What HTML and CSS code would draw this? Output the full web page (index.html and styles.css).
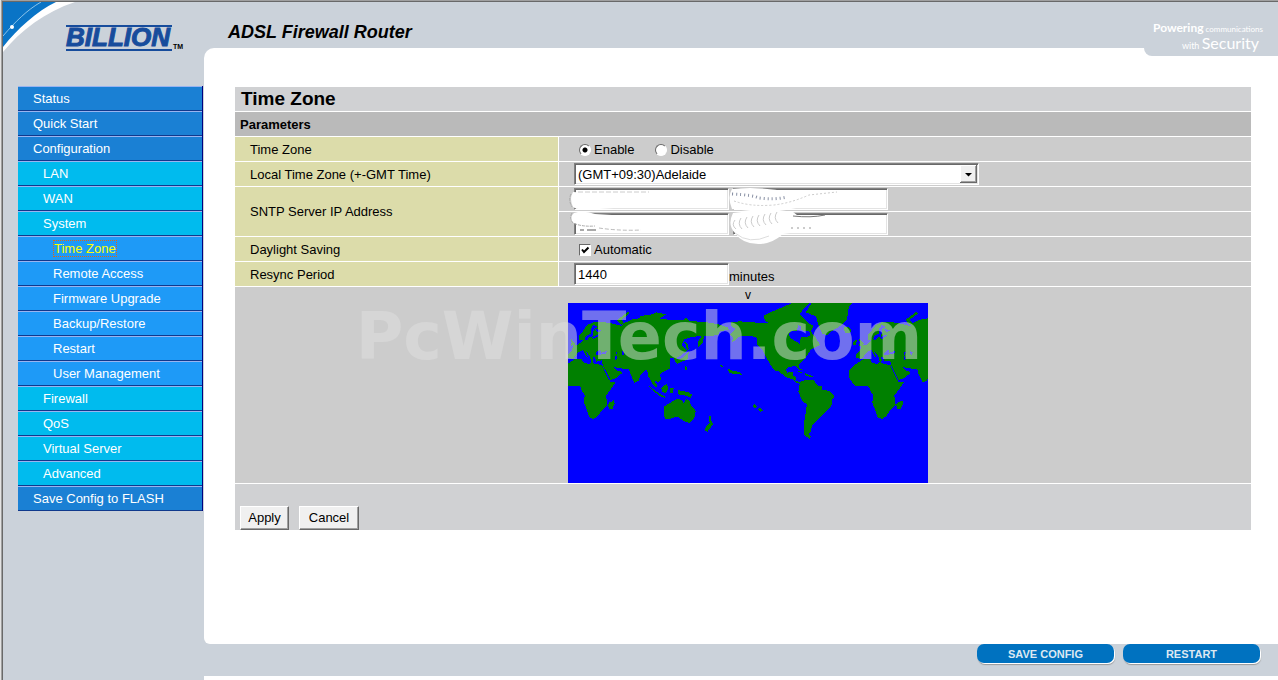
FILE: index.html
```html
<!DOCTYPE html>
<html lang="en">
<head>
    <meta charset="UTF-8">
    <meta name="viewport" content="width=device-width, initial-scale=1.0">
    <title>ADSL Firewall Router</title>
    <link rel="stylesheet" href="styles.css">
</head>
<body>
<div class="page">
    <svg class="corner" width="72" height="50" viewBox="0 0 72 50" aria-hidden="true">
        <path d="M0 0H72C42 10 18 28 0 50Z" fill="#fff"/>
        <path d="M0 0H53C34 9 14 27 0 45Z" fill="#0a74c6"/>
        <path d="M0 34C12 20 24 8 38 0" fill="none" stroke="#8cc4ea"/>
        <circle cx="9" cy="25" r="2" fill="#fff"/>
    </svg>

    <div class="sidebar">
        <svg class="logo" width="122" height="28" viewBox="0 0 122 28" role="img" aria-label="Billion">
            <path d="M1 2H107M1 26H107" stroke="#174c9c" stroke-width="2"/>
            <text class="logo-name" x="1" y="22">BILLION</text>
            <text class="logo-tm" x="108" y="25">TM</text>
        </svg>
        <nav class="menu">
            <a class="item" href="#">Status</a>
            <a class="item" href="#">Quick Start</a>
            <a class="item" href="#">Configuration</a>
            <a class="item sub" href="#">LAN</a>
            <a class="item sub" href="#">WAN</a>
            <a class="item sub" href="#">System</a>
            <a class="item leaf current" href="#"><span>Time Zone</span></a>
            <a class="item leaf" href="#">Remote Access</a>
            <a class="item leaf" href="#">Firmware Upgrade</a>
            <a class="item leaf" href="#">Backup/Restore</a>
            <a class="item leaf" href="#">Restart</a>
            <a class="item leaf" href="#">User Management</a>
            <a class="item sub" href="#">Firewall</a>
            <a class="item sub" href="#">QoS</a>
            <a class="item sub" href="#">Virtual Server</a>
            <a class="item sub" href="#">Advanced</a>
            <a class="item" href="#">Save Config to FLASH</a>
        </nav>
    </div>

    <div class="content">
        <header class="header">
            <h1>ADSL Firewall Router</h1>
            <div class="slogan">
                <div><b>Powering</b> communications</div>
                <div class="slogan-second">with <span>Security</span></div>
            </div>
        </header>

        <main class="panel">
            <form>
            <table class="settings">
                <colgroup>
                    <col class="col-label">
                    <col>
                </colgroup>
                <tr class="title"><th colspan="2"><h2>Time Zone</h2></th></tr>
                <tr class="section"><th colspan="2">Parameters</th></tr>
                <tr>
                    <th>Time Zone</th>
                    <td>
                        <div class="field choices">
                            <label><input type="radio" name="tz" checked>Enable</label>
                            <label><input type="radio" name="tz">Disable</label>
                        </div>
                    </td>
                </tr>
                <tr>
                    <th><label for="zone">Local Time Zone (+-GMT Time)</label></th>
                    <td>
                        <div class="field">
                            <div class="select">
                                <select id="zone"><option>(GMT+09:30)Adelaide</option></select>
                                <svg width="17" height="18" viewBox="0 0 17 18" aria-hidden="true">
                                    <path d="M0 0H17V18H0Z" fill="#696969"/>
                                    <path d="M0 0H16V17H0Z" fill="#fff"/>
                                    <path d="M1 1H16V17H1Z" fill="#a0a0a0"/>
                                    <path d="M1 1H15V16H1Z" fill="#f0f0f0"/>
                                    <path d="M5 8H12L8.500 11.500Z" fill="#000"/>
                                </svg>
                            </div>
                        </div>
                    </td>
                </tr>
                <tr>
                    <th rowspan="2">SNTP Server IP Address</th>
                    <td>
                        <div class="field servers">
                            <input class="box" type="text" aria-label="SNTP server 1">
                            <input class="box" type="text" aria-label="SNTP server 2">
                            <svg class="smudge" width="330" height="60" viewBox="0 0 330 60" aria-hidden="true">
                                <g fill="#fff">
                                    <path d="M4 5Q0 12 4 20Q10 24 30 22L60 20L90 6L40 3Q20 6 4 5Z"/>
                                    <path d="M5 26Q0 30 4 36Q14 39 30 38L70 43L100 38L90 34L60 29L26 27Q14 23 5 26Z"/>
                                    <path d="M163 2Q158 10 163 22L190 25Q212 26 238 18L290 5L220 5Q190 -1 163 2Z"/>
                                    <path d="M164 26Q158 38 166 46Q174 58 192 57Q204 56 214 47L250 42L236 34L224 25Q190 22 164 26Z"/>
                                </g>
                                <g fill="none" stroke="#aaa">
                                    <path d="M2 7Q-1 13 3 20M3 26Q0 31 4 36Q13 40 26 39" stroke-dasharray="3 1"/>
                                    <path d="M9 5H80" stroke="#ccc" stroke-dasharray="5 2"/>
                                    <path d="M11 43h4M18 43h9" stroke="#555"/>
                                    <path d="M163 7Q184 8 190 11Q205 13 218 10" stroke="#8890a4" stroke-width="3" stroke-dasharray="1 3"/>
                                    <path d="M165 14Q182 20 205 18Q222 16 240 8L268 5" stroke="#ccc" stroke-dasharray="2 2"/>
                                    <path d="M166 33q-4 5 1 9m5-11q-4 6 1 11m5-12q-4 6 1 11m5-12q-4 6 1 11m5-12q-4 6 1 11m5-12q-4 6 1 11m5-12q-4 6 1 11m5-12q-4 6 1 11" stroke="#ccc"/>
                                    <path d="M166 46Q180 58 200 49" stroke="#ddd"/>
                                    <path d="M224 29Q242 31 256 28" stroke="#777"/>
                                    <path d="M222 41h20" stroke="#999" stroke-dasharray="2 4"/>
                                    <path d="M30 41Q50 44 72 43" stroke="#bbb" stroke-dasharray="4 2"/>
                                </g>
                            </svg>
                        </div>
                    </td>
                </tr>
                <tr>
                    <td>
                        <div class="field servers">
                            <input class="box" type="text" aria-label="SNTP server 3">
                            <input class="box" type="text" aria-label="SNTP server 4">
                        </div>
                    </td>
                </tr>
                <tr>
                    <th>Daylight Saving</th>
                    <td>
                        <div class="field choices">
                            <label><input type="checkbox" checked>Automatic</label>
                        </div>
                    </td>
                </tr>
                <tr>
                    <th><label for="resync">Resync Period</label></th>
                    <td>
                        <div class="field">
                            <input class="box" id="resync" type="text" value="1440">
                            <span class="unit">minutes</span>
                        </div>
                    </td>
                </tr>
                <tr>
                    <td class="map-cell" colspan="2">
                        <div class="marker">v</div>
                        <svg class="map" width="360" height="180" viewBox="24 39 1080 540" role="img" aria-label="World map">
                            <defs>
                                <g id="old-world">
                                    <g fill="#008000">
                                        <!-- Africa -->
                                        <path d="M44 208L30 217L18 225L3 240L2 262L12 278L22 287L58 288L64 294L65 302L74 315L72 339L80 357L87 381L101 387L114 378L125 362L142 345L138 317L152 298L167 276L151 276L140 256L126 225L105 222L95 215L88 223L72 218L64 207Z"/>
                                        <path d="M162 330L164 340L157 357L148 358L143 345L148 337L157 334Z"/>
                                        <!-- Europe and Asia -->
                                        <path d="M128 225L138 244L151 270L168 264L187 249L180 243L172 242L162 231L180 235L207 237L210 250L216 262L223 278L237 271L240 256L255 240L262 242L264 257L270 268L279 283L287 293L293 288L283 272L297 276L305 268L298 254L312 244L329 237L330 204L341 203L344 213L352 216L350 204L366 194L382 181L365 166L372 149L395 140L424 139L413 157L414 173L429 158L432 138L471 136L481 124L506 119L503 112L475 103L430 95L388 94L378 83L371 91L330 89L297 87L318 73L290 67L266 76L242 77L240 85L220 87L190 100L186 108L144 98L105 95L82 105L68 124L58 136L58 149L70 151L61 158L52 166L39 166L36 181L23 194L24 205L41 206L54 188L69 180L79 199L84 202L77 184L90 199L94 216L101 214L98 202L105 202L109 215L126 211Z"/>
                                        <path d="M171 90L204 65L208 71L184 89L193 101L184 105Z"/>
                                        <path d="M31 142L39 154L47 162L31 169L35 159ZM16 152L25 151L24 164L15 164Z"/>
                                        <path d="M341 205L358 208L372 201L387 183L382 209L361 216L351 223Z"/>
                                        <path d="M370 153L379 165L380 180L386 178L383 161Z"/>
                                        <!-- Southeast Asia, Oceania -->
                                        <path d="M267 288L286 302L304 315L317 320L315 324L298 317L281 303ZM303 294L319 282L326 291L318 309L308 307ZM331 294L341 295L337 311L331 308ZM354 300L385 307L395 313L394 324L374 316L356 314ZM374 226L381 232L382 243L376 239Z"/>
                                        <path d="M312 350L333 337L353 326L369 333L371 340L379 327L388 333L394 346L407 363L403 383L388 399L371 393L351 379L328 387L315 388L312 374Z"/>
                                        <path d="M447 378L454 379L454 393L459 403L443 425L435 422L437 411L449 400Z"/>
                                        <path d="M477 223L490 228L486 234ZM501 235L520 243L540 246L549 257L538 252L524 253L507 247Z"/>
                                    </g>
                                    <!-- inland seas -->
                                    <g fill="#00f">
                                        <path d="M100 104L113 111L101 118L99 139L86 143L82 151L73 147L79 137L93 130L93 116Z"/>
                                        <path d="M108 188L120 178L123 188L140 183L138 193L108 194ZM167 186L173 185L168 196L173 207L166 210ZM186 184L193 186L191 195L186 193Z"/>
                                        <path d="M96 142L118 132L114 139L99 148ZM104 116L125 121L114 127Z"/>
                                    </g>
                                </g>
                            </defs>
                            <path d="M24 39H1104V579H24Z" fill="#00f"/>
                            <use href="#old-world"/>
                            <use href="#old-world" x="865"/>
                            <g fill="#008000">
                                <!-- North and South America -->
                                <path d="M513 97L540 94L590 98L627 100L614 91L612 76L636 65L694 40H746L718 72L733 87L745 99L761 108L752 124L765 140L781 165L753 178L744 192L735 205L718 223L717 233L726 239L717 239L707 229L687 230L678 240L681 248L700 244L699 258L710 261L706 273L720 276L738 269L762 270L771 286L786 288L787 300L806 302L824 317L816 330L815 346L791 371L770 393L757 407L752 424L747 432L753 440L748 447L732 433V400L741 343L728 335L715 305L719 282L704 275L696 267L677 261L655 243L643 241L622 209L605 176L592 165L591 144L573 138L542 137L529 147L514 160L520 145L511 134L526 116L515 110Z"/>
                                <path d="M710 243L729 246L724 250ZM734 249L760 260L756 263L735 256Z"/>
                                <!-- Greenland, Iceland -->
                                <path d="M754 40H875L866 53L863 70L862 86L842 107L813 125L800 136L787 131L774 103L768 78L753 74L738 67ZM850 113L864 110L875 119L869 130L855 129Z"/>
                                <path d="M577 348L584 342L591 351L583 354ZM594 358L600 353L610 361L602 366Z"/>
                            </g>
                            <path d="M686 131L696 123L712 122L713 106L724 108L724 121L748 124L752 139L722 141L720 162L702 151L690 144Z" fill="#00f"/>
                        </svg>
                    </td>
                </tr>
                <tr class="actions">
                    <td colspan="2">
                        <button type="button">Apply</button>
                        <button type="button" class="wide">Cancel</button>
                    </td>
                </tr>
            </table>
            </form>
        </main>

        <footer class="footer">
            <button type="button">SAVE CONFIG</button>
            <button type="button">RESTART</button>
        </footer>
        <div class="bottom"></div>
    </div>

    <div class="watermark">PcWinTech.com</div>
</div>
</body>
</html>
```
FILE: styles.css
```css
* {
    box-sizing: border-box;
}

body {
    margin: 0;
    background-color: #cbd2da;
    color: #000;
    font-family: "Liberation Sans", Arial, sans-serif;
    font-size: 13px;
}

.page {
    position: relative;
    display: grid;
    grid-template-columns: 201px 1fr;
    min-height: 100vh;
    padding: 2px 0 0 3px;
    box-shadow: inset 1px 0 #e3e3e3, inset 2px 1px #a0a0a0, inset 3px 2px #696969;
}

.corner {
    position: absolute;
    top: 2px;
    left: 3px;
}

/* sidebar */
.sidebar {
    padding: 22px 0 0 15px;
}

.logo {
    display: block;
    margin: 0 0 34px 47px;
}

.logo-name {
    font-size: 26px;
    font-weight: bold;
    font-style: italic;
    fill: #174c9c;
    stroke: #174c9c;
}

.logo-tm {
    font-size: 7px;
    font-weight: bold;
}

.menu {
    border-right: 1px solid #000080;
    margin-right: 1px;
}

.item {
    display: block;
    height: 25px;
    padding-left: 15px;
    border-top: 1px solid #99b4f0;
    border-bottom: 1px solid #10398c;
    background-color: #1a80d4;
    color: #fff;
    line-height: 23px;
    text-decoration: none;
}

.sub {
    padding-left: 25px;
    background-color: #00bbee;
}

.leaf {
    padding-left: 35px;
    background-color: #1e9af7;
}

.current {
    color: #ff0;
}

.current span {
    border: 1px dotted #e06810;
}

/* header */
.content {
    display: flex;
    flex-direction: column;
}

.header {
    position: relative;
    height: 46px;
    padding: 20px 0 0 24px;
}

.header h1 {
    margin: 0;
    font-size: 18px;
    line-height: 20px;
    font-style: italic;
}

.slogan {
    position: absolute;
    top: 0;
    right: 0;
    width: 134px;
    height: 54px;
    padding: 19px 15px 0 0;
    border-bottom-left-radius: 8px;
    background-color: #cbd2da;
    color: #fff;
    font-family: Lato, sans-serif;
    font-size: 8px;
    line-height: 14px;
    text-align: right;
    white-space: nowrap;
}

.slogan b {
    font-size: 12px;
}

.slogan-second {
    padding-right: 4px;
    font-size: 9px;
}

.slogan-second span {
    font-size: 16px;
}

/* panel */
.panel {
    padding: 38px 26px 113px 30px;
    border-radius: 10px 0 0 6px;
    background-color: #fff;
}

.settings {
    width: 100%;
    border-spacing: 1px;
    table-layout: fixed;
}

.col-label {
    width: 323px;
}

.settings th,
.settings td {
    height: 24px;
    padding: 0;
    background-color: #ccc;
    text-align: left;
}

.settings th {
    padding-left: 15px;
    background-color: #dcdcaa;
    font-weight: normal;
}

.settings .title th {
    padding-left: 6px;
    background-color: #d0d1d3;
}

.title h2 {
    margin: 0;
    font-size: 19px;
    line-height: 24px;
}

.settings .section th {
    padding-left: 5px;
    background-color: #bababa;
    font-weight: bold;
}

.field {
    display: flex;
    align-items: center;
    height: 24px;
    padding-left: 15px;
}

.choices {
    gap: 21px;
    padding: 1px 0 0 20px;
}

.choices label {
    display: flex;
    align-items: center;
    gap: 3px;
}

.choices input {
    appearance: none;
    width: 12px;
    height: 12px;
    margin: 0;
    border: 1px solid;
    border-color: #696969 #fff #fff #696969;
    background-color: #fff;
}

.choices input[type="radio"] {
    border-radius: 50%;
}

.choices input[type="radio"]:checked {
    background-image: radial-gradient(circle, #000 2px, transparent 3px);
}

.choices input[type="checkbox"]:checked {
    background-image: url("data:image/svg+xml,%3Csvg xmlns='http://www.w3.org/2000/svg' viewBox='0 0 10 10'%3E%3Cpath d='M2 4.500L4 7L8.500 2.500' fill='none' stroke='%23000' stroke-width='2'/%3E%3C/svg%3E");
}

.box,
.select {
    border: 1px solid;
    border-color: #808080 #fff #fff #808080;
    background-color: #fff;
    box-shadow: inset 1px 1px #696969, inset -1px -1px #e3e3e3;
}

.box {
    width: 155px;
    height: 22px;
    padding: 0 3px;
    font: inherit;
}

.servers {
    position: relative;
    gap: 4px;
}

.smudge {
    position: absolute;
    top: 0;
    left: 10px;
    z-index: 1;
    pointer-events: none;
}

.unit {
    padding-top: 4px;
}

.select {
    display: flex;
    align-items: center;
    width: 405px;
    height: 22px;
    padding-right: 1px;
}

.select select {
    appearance: none;
    flex: 1;
    border: 0;
    padding: 0 3px;
    background: transparent;
    color: inherit;
    font: inherit;
}

.settings .map-cell {
    padding-left: 10px;
    text-align: center;
}

.marker {
    font-size: 12px;
    line-height: 16px;
}

.map {
    display: block;
    margin: 0 auto;
    shape-rendering: crispEdges;
}

.settings .actions td {
    padding: 22px 0 0 5px;
    background-color: #d0d1d3;
    font-size: 0;
}

.actions button {
    width: 49px;
    height: 24px;
    margin-right: 10px;
    padding: 0 0 2px;
    border: 1px solid;
    border-color: #fff #696969 #696969 #fff;
    background-color: #f0f0f0;
    box-shadow: inset -1px -1px #a0a0a0;
    font: 13px "Liberation Sans", Arial, sans-serif;
    vertical-align: top;
}

.actions .wide {
    width: 60px;
}

/* footer */
.footer {
    display: flex;
    justify-content: flex-end;
    gap: 9px;
    height: 32px;
    padding-right: 18px;
}

.footer button {
    width: 137px;
    height: 19px;
    padding: 1px 0 0;
    border: 0;
    border-radius: 7px;
    background-color: #0072c0;
    box-shadow: 1px 1px #fff, 1px 2px 1px #999;
    color: #dce8f2;
    font: bold 11px/18px "Liberation Sans", Arial, sans-serif;
}

.bottom {
    flex: 1;
    min-height: 4px;
    background-color: #fff;
}

.watermark {
    position: absolute;
    top: 305px;
    left: 0;
    right: 0;
    color: #e0e0e0;
    font: bold 65px/64px "DejaVu Sans", sans-serif;
    text-align: center;
    opacity: 0.5;
    pointer-events: none;
}
```
